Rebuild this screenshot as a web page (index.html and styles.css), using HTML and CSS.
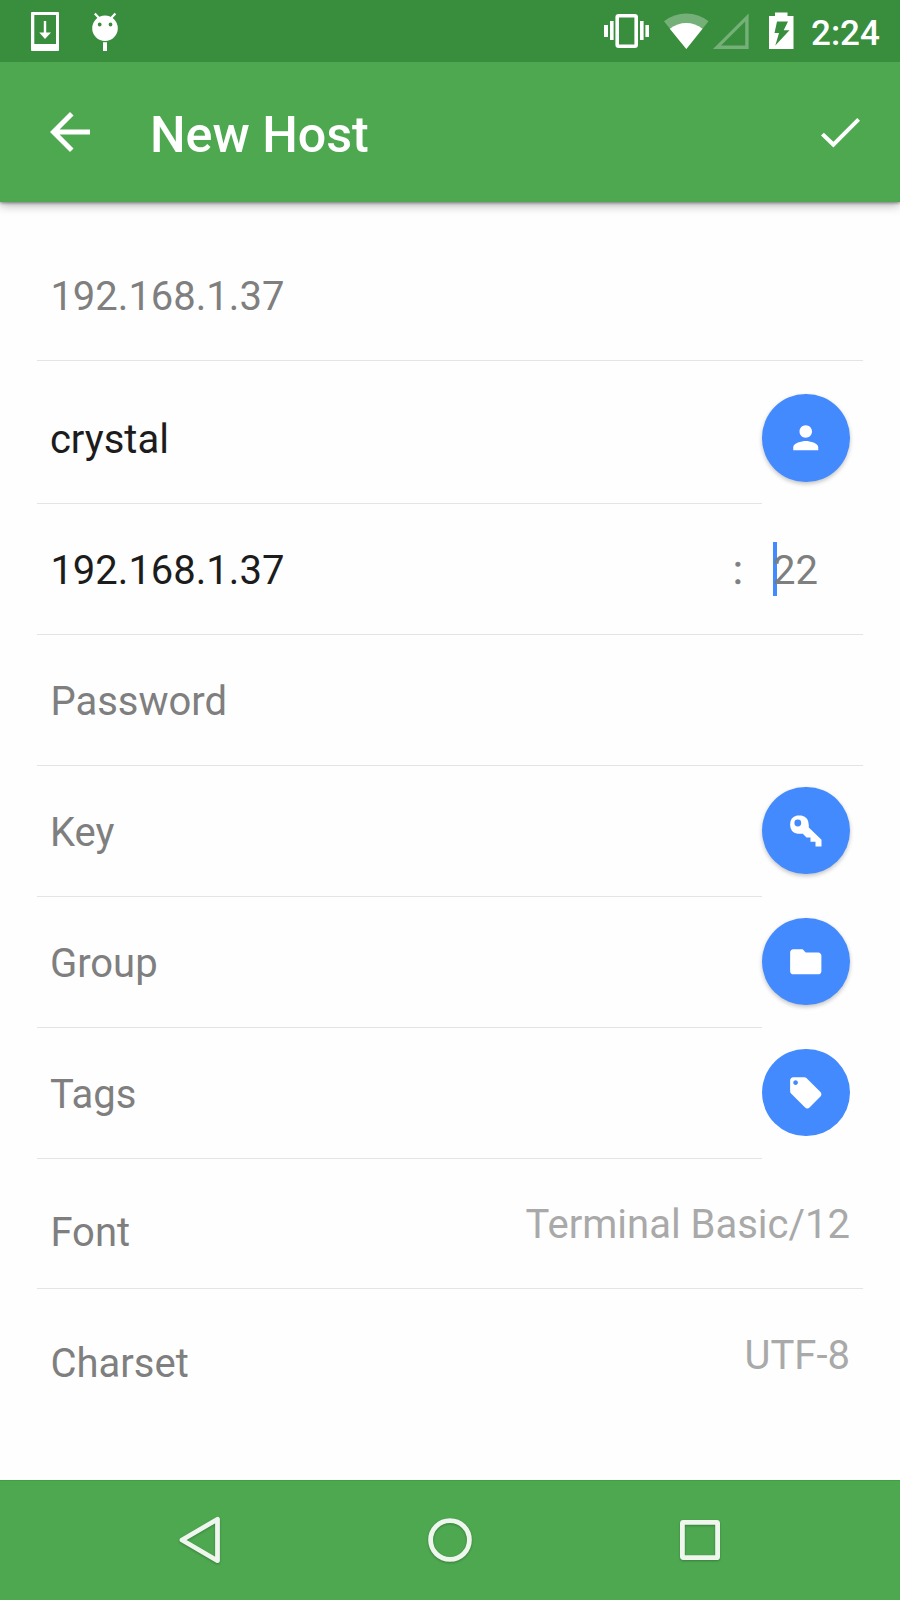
FILE: index.html
```html
<!DOCTYPE html>
<html lang="en">
<head>
<meta charset="utf-8">
<title>New Host</title>
<link rel="stylesheet" href="styles.css">
</head>
<body>
<div class="screen">
  <header class="top">
    <div class="status">
      <svg class="ic-left" width="100" height="62" viewBox="25 0 100 62" fill="#fff">
        <path fill-rule="evenodd" d="M32 12H58Q59 12 59 13V50Q59 51 58 51H32Q31 51 31 50V13Q31 12 32 12ZM34.3 15V44H56V15Z"/>
        <path d="M43.8 21H46.2V32.4H51L45 39L39.3 32.4H43.8Z"/>
        <path fill-rule="evenodd" d="M92.2 28.2a12.8 12.8 0 1 0 25.6 0a12.8 12.8 0 1 0 -25.6 0ZM97.8 24.5a1.9 1.9 0 1 1 3.8 0a1.9 1.9 0 1 1 -3.8 0ZM108.6 24.5a1.9 1.9 0 1 1 3.8 0a1.9 1.9 0 1 1 -3.8 0Z"/>
        <path d="M94.8 13.5L99 18M115.4 13.5L111.2 18" stroke="#fff" stroke-width="2.2"/>
        <path d="M103 42.2H107V51H103Z"/>
      </svg>
      <div class="status-right">
        <svg width="200" height="62" viewBox="600 0 200 62" fill="#fff">
          <rect x="617.2" y="15.8" width="19" height="30.4" rx="1.5" fill="none" stroke="#fff" stroke-width="3.6"/>
          <path d="M604 25H608V37H604ZM610 21H613.6V40H610ZM640 21H643.6V40H640ZM645.4 25H649V37H645.4Z"/>
          <path d="M664 21.2Q674 13.5 686.3 13.5T708.5 21.2L686.3 49Z" opacity=".3"/>
          <path d="M669.8 28.8Q677.5 22.9 686.3 22.9T702.5 28.8L686.3 49Z"/>
          <path fill-rule="evenodd" opacity=".3" d="M713 49L748.6 13.5V49ZM721 45.6H745.2V21.4Z"/>
          <path fill-rule="evenodd" d="M769 16H775V12.6H787.5V16H793.5V49H769ZM777 21.5L774.5 33H779L775.3 45.5L789.5 30.3H783.7L788 21.5Z"/>
        </svg>
        <span class="clock">2:24</span>
      </div>
    </div>
    <div class="toolbar">
      <svg class="back" width="60" height="60" viewBox="0 0 24 24" fill="#fff"><path d="M20 11H7.83l5.59-5.59L12 4l-8 8 8 8 1.41-1.41L7.83 13H20v-2z"/></svg>
      <h1 class="title">New Host</h1>
      <svg class="done" width="60" height="60" viewBox="810 102.5 60 60" fill="#fff"><path d="M821 136L823.9 133.2L833.4 142.3L857.2 118.4L860 121.2L833.4 148Z"/></svg>
    </div>
  </header>

  <main class="form">
    <div class="row first"><span class="hint">192.168.1.37</span></div>
    <div class="row tall with-fab">
      <div class="cell"><span>crystal</span></div>
      <div class="fab"><svg width="37.5" height="37.5" viewBox="0 0 24 24"><path d="M12 12c2.21 0 4-1.79 4-4s-1.79-4-4-4-4 1.79-4 4 1.79 4 4 4zm0 2c-2.67 0-8 1.34-8 4v2h16v-2c0-2.66-5.33-4-8-4z"/></svg></div>
    </div>
    <div class="row">
      <span>192.168.1.37</span>
      <span class="colon">:</span>
      <span class="port"><i class="caret"></i>22</span>
    </div>
    <div class="row"><span class="hint">Password</span></div>
    <div class="row with-fab">
      <div class="cell"><span class="hint">Key</span></div>
      <div class="fab"><svg width="37.5" height="37.5" viewBox="787.5 811.5 37.5 37.5"><path fill-rule="evenodd" d="M797.5 815H802Q809.3 816.5 809.3 824.5V827L822 839.3V846H816V841.3H811V837H807L803.3 833.3H798Q790.6 832 790.6 824Q790.6 816.5 797.5 815ZM794.9 822.5a3.4 3.4 0 1 0 6.8 0a3.4 3.4 0 1 0 -6.8 0Z"/></svg></div>
    </div>
    <div class="row with-fab">
      <div class="cell"><span class="hint">Group</span></div>
      <div class="fab"><svg width="37.5" height="37.5" viewBox="0 0 24 24"><path d="M10 4H4c-1.1 0-1.99.9-1.99 2L2 18c0 1.1.9 2 2 2h16c1.1 0 2-.9 2-2V8c0-1.1-.9-2-2-2h-8l-2-2z"/></svg></div>
    </div>
    <div class="row with-fab">
      <div class="cell"><span class="hint">Tags</span></div>
      <div class="fab flat"><svg width="37.5" height="37.5" viewBox="0 0 24 24"><path d="M21.41 11.58l-9-9C12.05 2.22 11.55 2 11 2H4c-1.1 0-2 .9-2 2v7c0 .55.22 1.05.59 1.42l9 9c.36.36.86.58 1.41.58.55 0 1.05-.22 1.41-.59l7-7c.37-.36.59-.86.59-1.41 0-.55-.23-1.06-.59-1.42zM5.5 7C4.67 7 4 6.33 4 5.5S4.67 4 5.5 4 7 4.67 7 5.5 6.33 7 5.5 7z"/></svg></div>
    </div>
    <div class="row setting"><span class="hint">Font</span><span class="value">Terminal Basic/12</span></div>
    <div class="row setting last"><span class="hint">Charset</span><span class="value">UTF-8</span></div>
  </main>

  <nav class="nav">
    <svg width="60" height="60" viewBox="170 1510 60 60"><path d="M217.5 1519.3V1560.7L182 1540Z"/></svg>
    <svg width="60" height="60" viewBox="420 1510 60 60"><circle cx="450" cy="1540" r="19.4"/></svg>
    <svg width="60" height="60" viewBox="670 1510 60 60"><rect x="682.4" y="1522.4" width="35.2" height="35.2" rx="1"/></svg>
  </nav>
</div>
</body>
</html>
```

FILE: styles.css
```css
* { box-sizing: border-box; }

body {
  margin: 0;
  background: #fefefe;
  font-family: Roboto, "Noto Sans", sans-serif;
}

.screen {
  display: flex;
  flex-direction: column;
  width: 900px;
  height: 1600px;
  overflow: hidden;
}

.top {
  flex: none;
  height: 202px;
  background: #4da850;
  box-shadow: 0 3px 10px rgba(0, 0, 0, .3), 0 1px 3px rgba(0, 0, 0, .4);
}

.status {
  display: flex;
  justify-content: space-between;
  height: 62px;
  padding: 0 20px 0 25px;
  background: #398e3d;
  color: #fff;
}

.status-right { display: flex; }

.clock {
  width: 80px;
  padding: 13px 0 0 11px;
  font-size: 35px;
  font-weight: 500;
  line-height: 41px;
  white-space: nowrap;
}

.toolbar {
  display: flex;
  align-items: center;
  height: 140px;
  padding: 0 30px 0 40px;
}

.title {
  flex: 1;
  margin: 0 0 0 50px;
  padding-top: 5px;
  color: #fff;
  font-size: 50.2px;
  font-weight: 500;
  line-height: 60px;
}

.form {
  flex: none;
  height: 1278px;
  padding: 1px 37.5px 0 37.4px;
  color: #1c1c1c;
  font-size: 40px;
  line-height: 47px;
}

.row {
  display: flex;
  align-items: flex-start;
  height: 131px;
  padding: 43px 12.5px 0 13px;
  border-bottom: 1px solid #e4e4e4;
}

.row.first { height: 158px; padding-top: 70px; }

.row.with-fab { padding: 0 12.6px 0 0; border-bottom: 0; }

.cell {
  flex: 1;
  height: 100%;
  padding: 43px 12.5px 0;
  border-bottom: 1px solid #e4e4e4;
}

.tall { height: 143px; }
.tall .cell { padding-top: 55px; }
.row.tall .fab { margin-top: 33px; }

.hint, .colon, .port { color: #7f7f7f; }

.colon { margin-left: auto; width: 40px; -webkit-text-stroke: .6px #7f7f7f; }

.port { position: relative; width: 77px; }

.caret {
  position: absolute;
  left: 0;
  top: -5px;
  z-index: -1;
  width: 4px;
  height: 54px;
  background: #448aff;
}

.fab {
  display: flex;
  align-items: center;
  justify-content: center;
  width: 87.5px;
  height: 87.5px;
  margin-top: 20.5px;
  border-radius: 50%;
  background: #448aff;
  box-shadow: 0 2px 4px rgba(0, 0, 0, .24);
}

.fab.flat { box-shadow: none; }
.fab svg { fill: #fff; }

.row.setting { height: 130px; padding-top: 50px; justify-content: space-between; }
.value { margin-top: -8px; color: #a9a9a9; }
.row.last { padding-top: 51px; border-bottom: 0; }

.nav {
  display: flex;
  align-items: center;
  justify-content: space-between;
  flex: none;
  height: 120px;
  padding: 0 170px 1px;
  background: #4da850;
  border-top: 1px solid #3aa341;
}

.nav svg {
  fill: none;
  stroke: #eef6ee;
  stroke-width: 4.8;
  stroke-linejoin: round;
  filter: drop-shadow(0 1px 1px rgba(0, 0, 0, .25));
}
```
